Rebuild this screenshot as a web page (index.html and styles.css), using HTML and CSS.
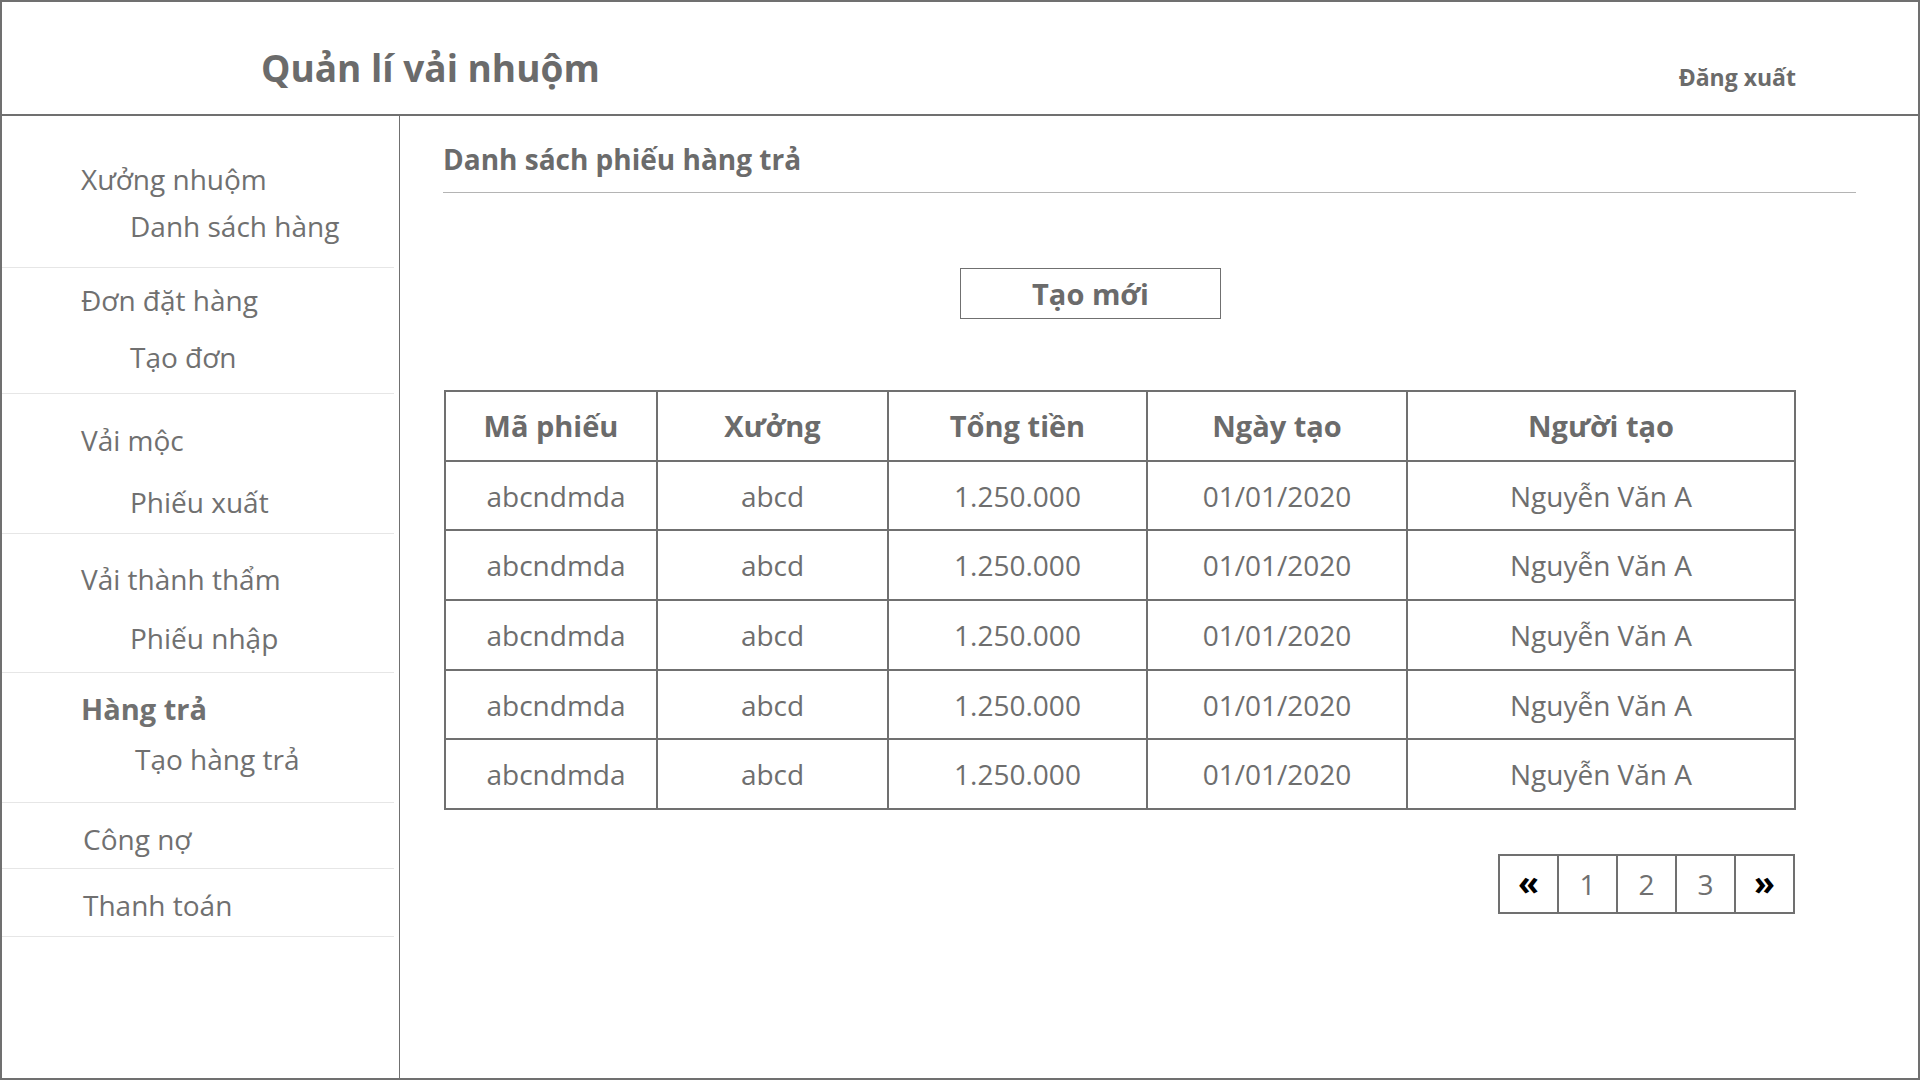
FILE: index.html
```html
<!DOCTYPE html>
<html lang="vi">
<head>
<meta charset="utf-8">
<title>Quản lí vải nhuộm</title>
<link rel="stylesheet" href="styles.css">
</head>
<body>
<div class="frame">
  <header class="topbar">
    <h1 class="app-title">Quản lí vải nhuộm</h1>
    <a class="logout">Đăng xuất</a>
  </header>
  <div class="body">
    <nav class="sidebar">
      <div class="nav-group g1">
        <div class="nav-main">Xưởng nhuộm</div>
        <div class="nav-sub">Danh sách hàng</div>
      </div>
      <div class="nav-group g2">
        <div class="nav-main">Đơn đặt hàng</div>
        <div class="nav-sub">Tạo đơn</div>
      </div>
      <div class="nav-group g3">
        <div class="nav-main">Vải mộc</div>
        <div class="nav-sub">Phiếu xuất</div>
      </div>
      <div class="nav-group g4">
        <div class="nav-main">Vải thành thẩm</div>
        <div class="nav-sub">Phiếu nhập</div>
      </div>
      <div class="nav-group g5">
        <div class="nav-main active">Hàng trả</div>
        <div class="nav-sub">Tạo hàng trả</div>
      </div>
      <div class="nav-group g6">
        <div class="nav-main">Công nợ</div>
      </div>
      <div class="nav-group g7">
        <div class="nav-main">Thanh toán</div>
      </div>
    </nav>
    <main class="content">
      <h2 class="page-title">Danh sách phiếu hàng trả</h2>
      <button class="btn-create">Tạo mới</button>
      <table class="grid">
        <thead>
          <tr>
            <th class="c1">Mã phiếu</th>
            <th class="c2">Xưởng</th>
            <th class="c3">Tổng tiền</th>
            <th class="c4">Ngày tạo</th>
            <th class="c5">Người tạo</th>
          </tr>
        </thead>
        <tbody>
          <tr><td class="code">abcndmda</td><td>abcd</td><td>1.250.000</td><td>01/01/2020</td><td>Nguyễn Văn A</td></tr>
          <tr><td class="code">abcndmda</td><td>abcd</td><td>1.250.000</td><td>01/01/2020</td><td>Nguyễn Văn A</td></tr>
          <tr><td class="code">abcndmda</td><td>abcd</td><td>1.250.000</td><td>01/01/2020</td><td>Nguyễn Văn A</td></tr>
          <tr><td class="code">abcndmda</td><td>abcd</td><td>1.250.000</td><td>01/01/2020</td><td>Nguyễn Văn A</td></tr>
          <tr><td class="code">abcndmda</td><td>abcd</td><td>1.250.000</td><td>01/01/2020</td><td>Nguyễn Văn A</td></tr>
        </tbody>
      </table>
      <div class="pager">
        <span class="page arrow">«</span>
        <span class="page">1</span>
        <span class="page">2</span>
        <span class="page">3</span>
        <span class="page arrow">»</span>
      </div>
    </main>
  </div>
</div>
</body>
</html>
```

FILE: styles.css
```css
* { box-sizing: border-box; }
html, body { margin: 0; padding: 0; }
body {
  font-family: "Open Sans", "Noto Sans", sans-serif;
  color: #6e6e6e;
  background: #fff;
}
.frame {
  width: 1920px;
  height: 1080px;
  border: 2px solid #707070;
  display: flex;
  flex-direction: column;
}
.topbar {
  height: 114px;
  flex: none;
  border-bottom: 2px solid #707070;
  display: flex;
  justify-content: space-between;
  align-items: flex-start;
  padding: 0 122px 0 259px;
}
.app-title {
  margin: 42px 0 0;
  font-size: 37px;
  line-height: 48px;
  font-weight: 700;
  color: #6b6b6b;
}
.logout {
  margin-top: 59px;
  font-size: 23px;
  line-height: 32px;
  font-weight: 700;
  color: #6b6b6b;
}
.body {
  flex: 1;
  display: flex;
  min-height: 0;
}
.sidebar {
  width: 398px;
  flex: none;
  border-right: 1px solid #707070;
  padding-right: 5px;
}
.nav-group {
  border-bottom: 1px solid #e6e6e6;
  font-size: 28px;
  color: #707070;
}
.nav-main, .nav-sub { line-height: 36px; white-space: nowrap; }
.nav-main { padding-left: 79px; }
.nav-sub { padding-left: 128px; }
.nav-main.active { font-weight: 700; font-size: 29px; }
.g1 { padding: 45px 0 23px; }
.g1 .nav-sub { margin-top: 11px; }
.g2 { padding: 14px 0 18px; }
.g2 .nav-sub { margin-top: 21px; }
.g3 { padding: 28px 0 13px; }
.g3 .nav-sub { margin-top: 26px; }
.g4 { padding: 27px 0 16px; }
.g4 .nav-sub { margin-top: 23px; }
.g5 { padding: 18px 0 25px; }
.g5 .nav-sub { margin-top: 14px; padding-left: 133px; }
.g6 { padding: 18px 0 11px; }
.g7 { padding: 18px 0 13px; }
.g6 .nav-main, .g7 .nav-main { padding-left: 81px; }

.content {
  flex: 1;
  padding: 23px 62px 0 43px;
}
.page-title {
  margin: 0;
  font-size: 28px;
  line-height: 40px;
  font-weight: 700;
  color: #6b6b6b;
  padding-bottom: 13px;
  border-bottom: 1px solid #b4b4b4;
}
.btn-create {
  display: block;
  margin: 75px 0 0 517px;
  width: 261px;
  height: 51px;
  border: 1px solid #707070;
  background: #fff;
  font-family: inherit;
  font-size: 29px;
  font-weight: 700;
  color: #6b6b6b;
  padding: 0;
  line-height: 47px;
}
.grid {
  margin: 71px 0 0 1px;
  border-collapse: collapse;
  width: 1350px;
  table-layout: fixed;
}
.grid th, .grid td {
  border: 2px solid #707070;
  height: 69.7px;
  padding: 0;
  text-align: center;
  vertical-align: middle;
  font-size: 28px;
  color: #6e6e6e;
}
.grid th { font-weight: 700; font-size: 29px; color: #6b6b6b; }
.grid td.code { padding-left: 10px; }
.grid .c1 { width: 212px; }
.grid .c2 { width: 231px; }
.grid .c3 { width: 259px; }
.grid .c4 { width: 260px; }
.grid .c5 { width: 388px; }

.pager {
  display: flex;
  justify-content: flex-end;
  margin: 44px 0 0 1px;
  width: 1351px;
}
.page {
  width: 61px;
  height: 60px;
  border: 2px solid #707070;
  margin-left: -2px;
  display: flex;
  align-items: center;
  justify-content: center;
  font-size: 28px;
  color: #707070;
}
.page.arrow {
  color: #000;
  font-weight: 700;
  font-size: 34px;
  padding-bottom: 4px;
}
```
